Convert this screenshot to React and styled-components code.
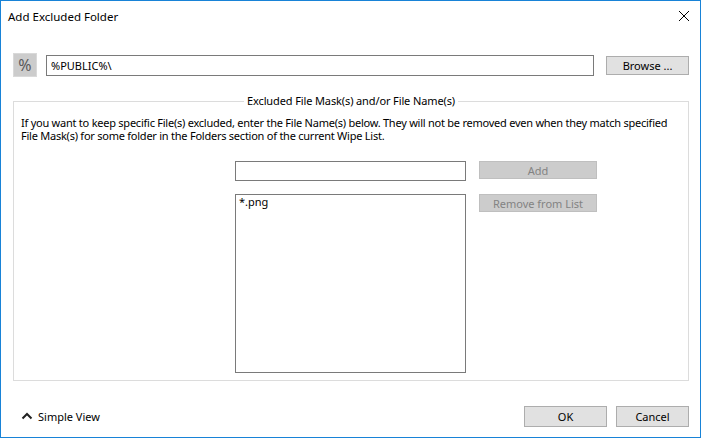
import React, { useState } from 'react';
import styled, { createGlobalStyle } from 'styled-components';

const GlobalStyle = createGlobalStyle`
    html, body {
        margin: 0;
        padding: 0;
        background: #ffffff;
    }
    * {
        box-sizing: border-box;
    }
`

const Window = styled.div`
    display: flex;
    flex-direction: column;
    width: 701px;
    height: 438px;
    background: #ffffff;
    border: 1px solid #1883d7;
    font-family: "Noto Sans", "Liberation Sans", sans-serif;
    font-size: 11px;
    color: #000000;
`

const TitleBar = styled.div`
    display: flex;
    align-items: center;
    justify-content: space-between;
    height: 30px;
    padding: 0 9px 0 7px;
`

const Title = styled.span`
    font-size: 11.5px;
`

const CloseButton = styled.div`
    display: flex;
    align-items: center;
    justify-content: center;
    width: 14px;
    height: 14px;
`

const Content = styled.div`
    display: flex;
    flex-direction: column;
    flex: 1;
    padding: 22px 11px 0 12px;
`

const PathRow = styled.div`
    display: flex;
    align-items: center;
    height: 24px;
`

const PercentBox = styled.div`
    display: flex;
    align-items: center;
    justify-content: center;
    width: 24px;
    height: 24px;
    background: #cccccc;
    border: 1px solid #d9d9d9;
    color: #5a5a5a;
    font-size: 16px;
    margin-right: 9px;
`

const TextBox = styled.input`
    font-family: inherit;
    font-size: 11px;
    height: ${p => p.$h || 21}px;
    width: ${p => p.$w}px;
    border: 1px solid #7a7a7a;
    padding: 0 4px;
    margin: 0;
    outline: none;
    color: #000000;
`

const Button = styled.button`
    font-family: inherit;
    font-size: 11px;
    height: ${p => p.$h || 21}px;
    width: ${p => p.$w}px;
    margin: 0;
    padding: 0;
    background: ${p => (p.disabled ? '#cccccc' : '#e1e1e1')};
    border: 1px solid ${p => (p.disabled ? '#bfbfbf' : '#adadad')};
    color: ${p => (p.disabled ? '#838383' : '#000000')};
    line-height: 1;
`

const BrowseButton = styled(Button)`
    margin-left: 12px;
`

const GroupBox = styled.fieldset`
    margin: 16px 0 0 0;
    padding: 7px 6px 6px 6px;
    min-width: 0;
    border: 1px solid #dcdcdc;
    height: 288px;
    display: flex;
    flex-direction: column;
`

const Legend = styled.legend`
    margin: 0 auto;
    padding: 0 3px;
    font-size: 11px;
    line-height: 16px;
    letter-spacing: -0.12px;
`

const Description = styled.p`
    margin: 0 0 0 1px;
    line-height: 13px;
    white-space: nowrap;
    letter-spacing: -0.24px;
`

const MaskGrid = styled.div`
    display: grid;
    grid-template-columns: 231px 118px;
    grid-template-rows: 20px 179px;
    column-gap: 13px;
    row-gap: 13px;
    margin: 19px 0 0 215px;
`

const MaskList = styled.div`
    border: 1px solid #7a7a7a;
    padding: 0 3px;
    line-height: 14px;
`

const Footer = styled.div`
    display: flex;
    align-items: flex-end;
    justify-content: space-between;
    padding: 0 0 10px 8px;
    flex: 1;
`

const ViewToggle = styled.div`
    display: flex;
    align-items: center;
    gap: 5px;
    height: 22px;
`

const FooterButtons = styled.div`
    display: flex;
    gap: 9px;
`

export default function App() {
    const [path, setPath] = useState('%PUBLIC%\\');
    const [mask, setMask] = useState('');

    return (
        <>
            <GlobalStyle />
            <Window>
                <TitleBar>
                    <Title>Add Excluded Folder</Title>
                    <CloseButton>
                        <svg width="12" height="12" viewBox="0 0 12 12">
                            <path d="M1 1 L11 11 M11 1 L1 11" stroke="#000" strokeWidth="1" />
                        </svg>
                    </CloseButton>
                </TitleBar>
                <Content>
                    <PathRow>
                        <PercentBox>%</PercentBox>
                        <TextBox $w={548} value={path} onChange={e => setPath(e.target.value)} />
                        <BrowseButton $w={83} $h={19}>Browse ...</BrowseButton>
                    </PathRow>
                    <GroupBox>
                        <Legend>Excluded File Mask(s) and/or File Name(s)</Legend>
                        <Description>
                            If you want to keep specific File(s) excluded, enter the File Name(s) below. They will not be removed even when they match specified
                            <br />
                            File Mask(s) for some folder in the Folders section of the current Wipe List.
                        </Description>
                        <MaskGrid>
                            <TextBox $w={231} $h={20} value={mask} onChange={e => setMask(e.target.value)} />
                            <Button $w={118} $h={18} disabled>Add</Button>
                            <MaskList>*.png</MaskList>
                            <Button $w={118} $h={18} disabled>Remove from List</Button>
                        </MaskGrid>
                    </GroupBox>
                    <Footer>
                        <ViewToggle>
                            <svg width="12" height="8" viewBox="0 0 12 8">
                                <polyline points="1.5,6.5 6,2 10.5,6.5" fill="none" stroke="#222" strokeWidth="2" />
                            </svg>
                            <span>Simple View</span>
                        </ViewToggle>
                        <FooterButtons>
                            <Button $w={83} $h={21}>OK</Button>
                            <Button $w={73} $h={21}>Cancel</Button>
                        </FooterButtons>
                    </Footer>
                </Content>
            </Window>
        </>
    );
}
